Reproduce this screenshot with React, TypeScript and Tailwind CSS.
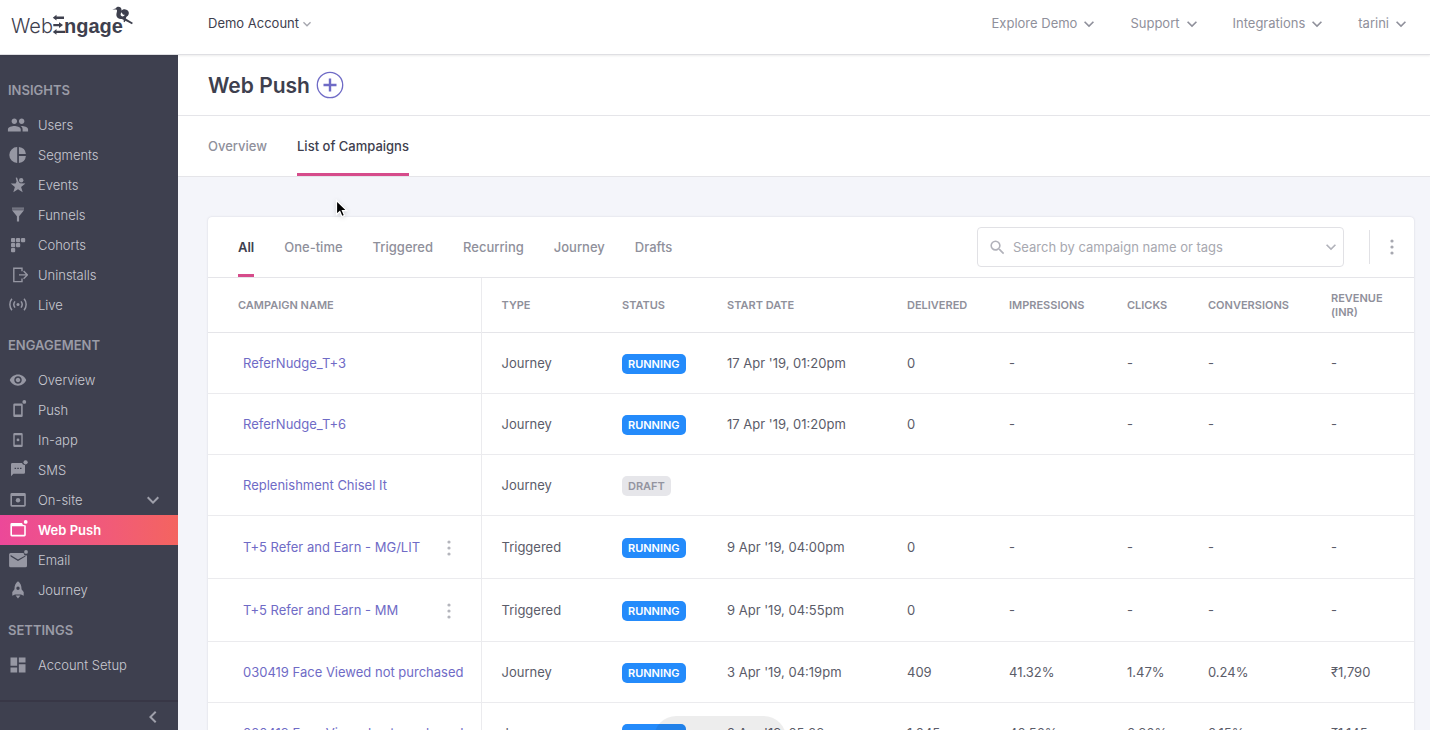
import type { ReactNode } from "react";
import {
  MdDashboard,
  MdKeyboardArrowDown,
  MdKeyboardArrowLeft,
  MdPeople,
  MdSearch,
  MdVisibility,
} from "react-icons/md";

function Glyph({ children }: { children: ReactNode }) {
  return (
    <svg viewBox="0 0 20 20" className="size-5 shrink-0" fill="currentColor" aria-hidden="true">
      {children}
    </svg>
  );
}

const dots = (
  <Glyph>
    <circle cx="10" cy="4" r="1.6" />
    <circle cx="10" cy="10" r="1.6" />
    <circle cx="10" cy="16" r="1.6" />
  </Glyph>
);

const icons = {
  users: <MdPeople className="size-[22px] shrink-0" />,
  segments: (
    <Glyph>
      <path d="M9.2 2.100v15.800A7.900 7.900 0 0 1 9.200 2.100zM10.900 2.100a7.900 7.900 0 0 1 7 7h-7zM10.900 10.900h7a7.900 7.900 0 0 1-7 7z" />
    </Glyph>
  ),
  events: (
    <Glyph>
      <path d="M7.700 2.800 9 2.400l1.600 4.400 1.400 1.500 5.400.2-4.300 3.500 1.600 5.200-4.700-3-4.700 3 1.600-5.200L2.700 8.500h4.900l1-2z" />
      <circle cx="13.200" cy="5.200" r="2.200" />
    </Glyph>
  ),
  funnels: (
    <Glyph>
      <path d="M4 2.400h12v2.400H4z" opacity=".6" />
      <path d="M4 5.200h12l-4.900 6v5.400H8.900v-5.400z" />
    </Glyph>
  ),
  cohorts: (
    <Glyph>
      <rect x="3" y="3" width="4.200" height="4.200" rx="1" />
      <rect x="8" y="3" width="4.200" height="4.200" rx="1" />
      <rect x="13" y="3" width="4.200" height="4.200" rx="1" />
      <rect x="3" y="8" width="4.200" height="4.200" rx="1" />
      <rect x="8" y="8" width="4.200" height="4.200" rx="1" />
      <rect x="3" y="13" width="4.200" height="4.200" rx="1" />
    </Glyph>
  ),
  uninstalls: (
    <Glyph>
      <path
        d="M14 6.200V3.200H5.800v13.400H14v-3M11 9.900h8.200M15.600 6.100l3.800 3.800-3.800 3.800"
        fill="none"
        stroke="currentColor"
        strokeWidth="1.400"
      />
    </Glyph>
  ),
  live: (
    <Glyph>
      <circle cx="10" cy="9.500" r="1.500" />
      <path
        d="M7 6.400a5 5 0 0 0 0 6.200M13 6.400a5 5 0 0 1 0 6.200M3.900 3.800a9 9 0 0 0 0 11.400M16.100 3.800a9 9 0 0 1 0 11.400"
        fill="none"
        stroke="currentColor"
        strokeWidth="1.500"
      />
    </Glyph>
  ),
  eye: <MdVisibility className="size-[18px] shrink-0" />,
  push: (
    <Glyph>
      <path
        fillRule="evenodd"
        d="M6.500 3.600h7A1.200 1.200 0 0 1 14.700 4.800V15.800A1.200 1.200 0 0 1 13.500 17h-7A1.200 1.200 0 0 1 5.300 15.800V4.800A1.200 1.200 0 0 1 6.500 3.600zM6.900 5.700v8.900h6.200V5.700z"
      />
      <circle cx="16.300" cy="1.900" r="1.900" />
    </Glyph>
  ),
  inapp: (
    <Glyph>
      <path
        fillRule="evenodd"
        d="M6.500 3h7A1.200 1.200 0 0 1 14.700 4.200V15.800A1.200 1.200 0 0 1 13.500 17h-7A1.200 1.200 0 0 1 5.300 15.800V4.200A1.200 1.200 0 0 1 6.500 3zM6.700 5.200v9.500h6.600V5.200z"
      />
      <circle cx="10" cy="9.900" r="1.400" />
    </Glyph>
  ),
  sms: (
    <Glyph>
      <path
        fillRule="evenodd"
        d="M4.400 3H14l1 1.500 2 .4V12.500a1.300 1.300 0 0 1-1.300 1.300H5.400L3 16.200V4.400A1.400 1.400 0 0 1 4.400 3zM6.600 7.800v1.300h1.500V7.800zM9.300 7.800v1.300h1.500V7.800zM12 7.800v1.300h1.500V7.800z"
      />
      <circle cx="17.600" cy="2.300" r="2.100" />
    </Glyph>
  ),
  onsite: (
    <Glyph>
      <path
        fillRule="evenodd"
        d="M3.800 3h12.600A1.400 1.400 0 0 1 17.800 4.400V15.300A1.400 1.400 0 0 1 16.400 16.700H3.800A1.400 1.400 0 0 1 2.400 15.300V4.400A1.400 1.400 0 0 1 3.800 3zM4 6v9.100h12.200V6z"
      />
      <circle cx="10" cy="10.300" r="2.200" />
    </Glyph>
  ),
  webpush: (
    <Glyph>
      <path
        fillRule="evenodd"
        d="M3.800 3H14l.9 1.800 2.900.6V15A1.400 1.400 0 0 1 16.400 16.400H3.800A1.400 1.400 0 0 1 2.400 15V4.400A1.400 1.400 0 0 1 3.800 3zM4 6.300v8.500h12.200V6.300z"
      />
      <circle cx="17.700" cy="1.900" r="1.900" />
    </Glyph>
  ),
  email: (
    <Glyph>
      <path
        fillRule="evenodd"
        d="M2.600 3H15.500l1 2.300 2.500.1V15.700a1.500 1.500 0 0 1-1.500 1.500H2.600A1.500 1.500 0 0 1 1.100 15.700V4.500A1.500 1.500 0 0 1 2.600 3zM2.600 5v1.600l7.400 4.400 7.400-4.400V5.400L10 9.400z"
      />
      <circle cx="18" cy="1.900" r="1.900" />
    </Glyph>
  ),
  journey: (
    <Glyph>
      <path
        fillRule="evenodd"
        d="M10 1.200c2.500 1.700 3.500 4.500 3.500 7.300v.8l2.200 2.600v3.800l-2.700-1.300H7l-2.700 1.300v-3.800l2.200-2.600v-.8c0-2.800 1-5.600 3.500-7.300zM10 6.600a1.700 1.700 0 1 0 0 3.400 1.700 1.700 0 0 0 0-3.400z"
      />
      <path d="M7.600 15.600h4.800L10 18.600z" />
    </Glyph>
  ),
  dashboard: <MdDashboard className="size-5 shrink-0" />,
};

type NavItem = { label: string; icon: keyof typeof icons; active?: boolean; expandable?: boolean };

const sections: { title: string; items: NavItem[] }[] = [
  {
    title: "INSIGHTS",
    items: [
      { label: "Users", icon: "users" },
      { label: "Segments", icon: "segments" },
      { label: "Events", icon: "events" },
      { label: "Funnels", icon: "funnels" },
      { label: "Cohorts", icon: "cohorts" },
      { label: "Uninstalls", icon: "uninstalls" },
      { label: "Live", icon: "live" },
    ],
  },
  {
    title: "ENGAGEMENT",
    items: [
      { label: "Overview", icon: "eye" },
      { label: "Push", icon: "push" },
      { label: "In-app", icon: "inapp" },
      { label: "SMS", icon: "sms" },
      { label: "On-site", icon: "onsite", expandable: true },
      { label: "Web Push", icon: "webpush", active: true },
      { label: "Email", icon: "email" },
      { label: "Journey", icon: "journey" },
    ],
  },
  { title: "SETTINGS", items: [{ label: "Account Setup", icon: "dashboard" }] },
];

const columns = [
  { label: "CAMPAIGN NAME", width: "w-[273px]" },
  { label: "TYPE", width: "w-[121px]" },
  { label: "STATUS", width: "w-[105px]" },
  { label: "START DATE", width: "w-[180px]" },
  { label: "DELIVERED", width: "w-[102px]" },
  { label: "IMPRESSIONS", width: "w-[118px]" },
  { label: "CLICKS", width: "w-[81px]" },
  { label: "CONVERSIONS", width: "w-[123px]" },
  { label: "REVENUE (INR)", width: "w-[103px]" },
];

type Campaign = {
  name: string;
  type: string;
  status: "RUNNING" | "DRAFT";
  values: string[];
  menu?: boolean;
};

const campaigns: Campaign[] = [
  { name: "ReferNudge_T+3", type: "Journey", status: "RUNNING", values: ["17 Apr '19, 01:20pm", "0", "-", "-", "-", "-"] },
  { name: "ReferNudge_T+6", type: "Journey", status: "RUNNING", values: ["17 Apr '19, 01:20pm", "0", "-", "-", "-", "-"] },
  { name: "Replenishment Chisel It", type: "Journey", status: "DRAFT", values: ["", "", "", "", "", ""] },
  { name: "T+5 Refer and Earn - MG/LIT", type: "Triggered", status: "RUNNING", values: ["9 Apr '19, 04:00pm", "0", "-", "-", "-", "-"], menu: true },
  { name: "T+5 Refer and Earn - MM", type: "Triggered", status: "RUNNING", values: ["9 Apr '19, 04:55pm", "0", "-", "-", "-", "-"], menu: true },
  { name: "030419 Face Viewed not purchased", type: "Journey", status: "RUNNING", values: ["3 Apr '19, 04:19pm", "409", "41.32%", "1.47%", "0.24%", "₹1,790"] },
  { name: "020419 Face Viewed not purchased", type: "Journey", status: "RUNNING", values: ["2 Apr '19, 05:28pm", "1,045", "40.56%", "0.86%", "0.15%", "₹1,145"] },
];

function Logo() {
  return (
    <svg viewBox="0 0 126 38" className="h-[38px] w-[126px]" fill="#3e404e" role="img" aria-label="WebEngage">
      <text x="2" y="28" fontSize="20" fontWeight="300" fontFamily="Inter, sans-serif">
        Web
      </text>
      <path d="M47.500 11.500H55v2.400h-7.500v1.600L43.800 12.700l3.700-2.900zM44.300 18.900h5.700v-1.700l4 2.900L50 23v-1.700h-5.700zM47.500 25.700H56v2.400h-8.500v1.600L43.800 26.900l3.700-2.900z" />
      <text x="55" y="28" fontSize="20" fontWeight="700" fontFamily="'Liberation Sans', Arial, sans-serif">
        ngage
      </text>
      <path
        fillRule="evenodd"
        d="M103.300 4.500l3.300-1.100c.6-1.100 1.600-1.700 2.800-1.700 1.800 0 3.100 1.300 3.100 2.900v1.200c.9-1.200 2.500-1.800 4-1.200 2.300.4 3.700 2.200 3.300 4.200-.3 1.500-1.300 2.500-2.500 3.200l-.5 1.500 7 4.300-.8 1.500-6.600-3.500-.7 1.400-1.200-.6.300-1.600-2-1c-2.700.4-5-1-5.400-3.500-.2-1.900.7-3.400.6-4.900-.1-.7-.6-1-1.400-1zM112.800 7.200c-1.400 1.200-1.600 3-.4 3.900 1.200.8 2.900.2 3.300-1.300-1.400.2-2.600-.9-2.900-2.600z"
      />
    </svg>
  );
}

function Sidebar() {
  return (
    <aside className="flex w-[178px] shrink-0 flex-col bg-[#3e404f] pt-2.5">
      <nav className="min-h-0 grow overflow-hidden" aria-label="Main">
        {sections.map((section) => (
          <section key={section.title} className="pt-2.5">
            <h2 className="mb-[5px] pl-2 text-[13px] leading-[30px] font-semibold text-[#9a9ba6]">{section.title}</h2>
            <ul>
              {section.items.map((item) => (
                <li key={item.label}>
                  <a
                    href="#"
                    className={
                      item.active
                        ? "flex h-[30px] items-center bg-linear-to-r from-[#ec4899] to-[#f4645f] pl-2 font-semibold text-white"
                        : "flex h-[30px] items-center pl-2 font-light text-[#c9cad2]"
                    }
                  >
                    <span
                      className={
                        item.active
                          ? "flex w-5 shrink-0 justify-center text-white"
                          : "flex w-5 shrink-0 justify-center text-[#9697a3]"
                      }
                    >
                      {icons[item.icon]}
                    </span>
                    <span className="grow pt-0.5 pl-2.5">{item.label}</span>
                    {item.expandable && <MdKeyboardArrowDown className="mr-[13px] size-6 text-[#9fa0ab]" />}
                  </a>
                </li>
              ))}
            </ul>
          </section>
        ))}
      </nav>
      <div className="flex h-[30px] shrink-0 items-center justify-end border-t-2 border-[#383746] pt-0.5 pr-[13px]">
        <button type="button" aria-label="Collapse sidebar" className="text-[#9fa0ab]">
          <MdKeyboardArrowLeft className="size-6" />
        </button>
      </div>
    </aside>
  );
}

function CampaignTable() {
  return (
    <table className="w-full min-w-[1200px] table-fixed text-left">
      <thead>
        <tr className="h-[54px] border-b border-[#e5e5e9] text-[11px] leading-[14px] text-[#8f909b]">
          {columns.map((column, index) => (
            <th
              key={column.label}
              scope="col"
              className={
                index === 0
                  ? `${column.width} border-r border-[#ebebee] pl-[30px] font-semibold`
                  : `${column.width} pr-[30px] pl-5 font-semibold last:pr-2.5`
              }
            >
              {index === 8 ? <span className="block w-14">{column.label}</span> : column.label}
            </th>
          ))}
        </tr>
      </thead>
      <tbody>
        {campaigns.map((campaign) => (
          <tr
            key={campaign.name}
            className={campaign.menu ? "h-[63px] border-b border-[#ebebee]" : "h-[61px] border-b border-[#ebebee]"}
          >
            <td className="border-r border-[#ebebee] pt-0.5 pl-[35px] whitespace-nowrap">
              <div className="flex items-center justify-between pr-[22px]">
                <a href="#" className="text-[#6f6bc6]">
                  {campaign.name}
                </a>
                {campaign.menu && (
                  <button type="button" aria-label={`Options for ${campaign.name}`} className="text-[#b4b5bc]">
                    {dots}
                  </button>
                )}
              </div>
            </td>
            <td className="pt-0.5 pl-5">{campaign.type}</td>
            <td className="pt-0.5 pl-5">
              <span
                className={
                  campaign.status === "RUNNING"
                    ? "inline-block rounded-[5px] bg-[#248bfb] px-1.5 text-[11px] leading-5 font-semibold text-white"
                    : "inline-block rounded-[5px] bg-[#e6e6ea] px-1.5 text-[11px] leading-5 font-semibold text-[#9394a0]"
                }
              >
                {campaign.status}
              </span>
            </td>
            {campaign.values.map((value, index) => (
              <td key={index} className="pt-0.5 pl-5 whitespace-nowrap">
                {value}
              </td>
            ))}
          </tr>
        ))}
      </tbody>
    </table>
  );
}

const filters = ["All", "One-time", "Triggered", "Recurring", "Journey", "Drafts"];

export default function App() {
  return (
    <div className="flex h-screen flex-col overflow-hidden bg-white font-[Inter,sans-serif] text-[13px] text-[#5b5c69]">
      <header className="relative z-10 flex h-[55px] shrink-0 items-center border-b border-[#dfdfe3] pr-[19px] pb-1.5 shadow-[0_1px_2px_rgba(0,0,0,0.08)]">
        <a href="#" className="w-52 shrink-0 pl-[9px]">
          <Logo />
        </a>
        <button type="button" className="flex items-center text-[#3e404e]">
          Demo Account
          <MdKeyboardArrowDown className="size-4 text-[#a5a6ae]" />
        </button>
        <nav className="ml-auto flex items-center gap-[31px] text-[#8f909b]" aria-label="Account">
          {["Explore Demo", "Support", "Integrations", "tarini"].map((label) => (
            <button key={label} type="button" className="flex items-center gap-0.5">
              {label}
              <MdKeyboardArrowDown className="size-5" />
            </button>
          ))}
        </nav>
      </header>

      <div className="flex min-h-0 grow">
        <Sidebar />

        <main className="relative flex min-w-0 grow flex-col overflow-hidden bg-[#f4f5fa]">
          <div className="flex h-[61px] shrink-0 items-center gap-1.5 border-b border-[#e5e5e9] bg-white pl-[30px]">
            <h1 className="pt-0.5 text-[21px] font-semibold text-[#3e404e]">Web Push</h1>
            <button type="button" aria-label="Create campaign" className="text-[#6f6bc6]">
              <svg viewBox="0 0 28 28" className="size-7" fill="none" stroke="currentColor" aria-hidden="true">
                <circle cx="14" cy="14" r="12.700" strokeWidth="1.300" />
                <path d="M14 7.500v13M7.500 14h13" strokeWidth="2.400" />
              </svg>
            </button>
          </div>

          <nav
            className="flex h-[61px] shrink-0 gap-[30px] border-b border-[#e5e5e9] bg-white pl-[30px] leading-[61px] font-medium"
            aria-label="Web push"
          >
            <a href="#" className="border-b-3 border-transparent text-[#8f909b]">
              Overview
            </a>
            <a href="#" className="border-b-3 border-[#d64c8b] text-[#3e404e]">
              List of Campaigns
            </a>
          </nav>

          <div className="min-h-0 grow overflow-hidden pt-10 pr-4 pl-[30px]">
            <section className="overflow-hidden rounded-t bg-white shadow-[0_0_2px_rgba(60,60,90,0.2)]">
              <div className="flex h-[61px] items-center border-b border-[#e5e5e9] pl-[30px]">
                <nav className="flex gap-[30px] self-stretch leading-[61px] font-medium" aria-label="Campaign type">
                  {filters.map((filter, index) => (
                    <a
                      key={filter}
                      href="#"
                      className={
                        index === 0
                          ? "border-b-3 border-[#d64c8b] font-semibold text-[#3e404e]"
                          : "border-b-3 border-transparent text-[#8f909b]"
                      }
                    >
                      {filter}
                    </a>
                  ))}
                </nav>
                <label className="ml-auto flex h-10 w-[367px] items-center rounded border border-[#e1e1e5] pr-0.5 pl-2.5 text-[#b1b2ba]">
                  <MdSearch className="mr-1.5 size-[19px] shrink-0" />
                  <input
                    type="text"
                    aria-label="Search campaigns"
                    placeholder="Search by campaign name or tags"
                    className="min-w-0 grow bg-transparent pt-0.5 outline-none placeholder:text-[#a7a8b0]"
                  />
                  <MdKeyboardArrowDown className="size-5 shrink-0" />
                </label>
                <div className="mr-3 ml-[25px] flex h-[34px] items-center border-l border-[#e1e1e5] pl-3">
                  <button type="button" aria-label="More options" className="text-[#a7a8b0]">
                    {dots}
                  </button>
                </div>
              </div>
              <div className="overflow-x-auto">
                <CampaignTable />
              </div>
            </section>
          </div>

          <div className="absolute -bottom-[30px] left-[38%] h-11 w-[132px] rounded-full bg-black/7" />
        </main>
      </div>

      <svg viewBox="0 0 14 20" className="absolute top-[199px] left-[335px] z-20 h-5 w-3.5 drop-shadow-sm" aria-hidden="true">
        <path
          d="M1.500 1.500v14l3.300-3 2.100 5 2.600-1.100-2.100-4.800h4.400z"
          fill="#000"
          stroke="#fff"
          strokeWidth="1.200"
        />
      </svg>
    </div>
  );
}
